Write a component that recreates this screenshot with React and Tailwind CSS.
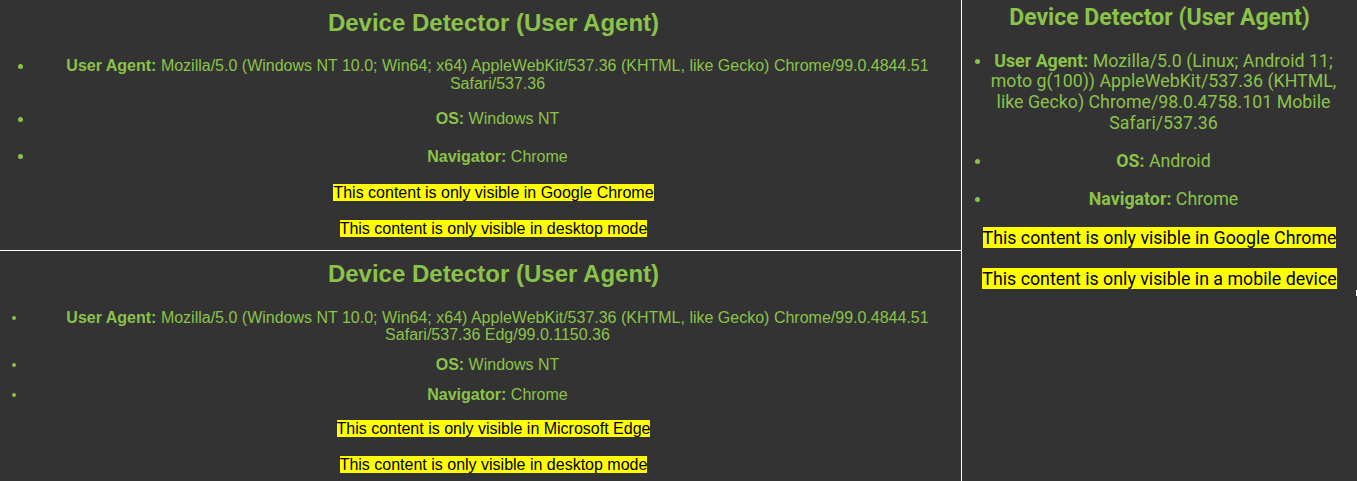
import React from 'react';

const green = 'text-[#8bc34a]';

function Dot({ className }) {
  return <div className={'shrink-0 rounded-full bg-[#8bc34a] ' + className} />;
}

export default function App() {
  return (
    <div className="flex h-[481px] w-[1357px] overflow-hidden bg-[#333333]">
      {/* left column: desktop Chrome + desktop Edge */}
      <div className={`flex w-[962px] shrink-0 flex-col border-r border-white font-['Liberation_Sans',Arial,sans-serif] ${green}`}>
        <div className="h-[251px] shrink-0 border-b border-white">
          <h2 className="mt-[9px] pl-[26px] text-center text-[24px] font-bold leading-[28px]">
            Device Detector (User Agent)
          </h2>
          <div className="mt-[20px] flex items-start text-[16px] leading-[18px]">
            <Dot className="ml-[18px] mt-[6.5px] h-[5px] w-[5px]" />
            <p className="ml-[11px] flex-1 text-center">
              <b>User Agent:</b> Mozilla/5.0 (Windows NT 10.0; Win64; x64) AppleWebKit/537.36 (KHTML, like Gecko) Chrome/99.0.4844.51
              <br />
              Safari/537.36
            </p>
          </div>
          <div className="mt-[17px] flex items-start text-[16px] leading-[18px]">
            <Dot className="ml-[18px] mt-[6.5px] h-[5px] w-[5px]" />
            <p className="ml-[11px] flex-1 text-center">
              <b>OS:</b> Windows NT
            </p>
          </div>
          <div className="mt-[19.5px] flex items-start text-[16px] leading-[18px]">
            <Dot className="ml-[18px] mt-[6.5px] h-[5px] w-[5px]" />
            <p className="ml-[11px] flex-1 text-center">
              <b>Navigator:</b> Chrome
            </p>
          </div>
          <p className="mt-[18px] pl-[26px] text-center text-[16px] leading-[18px] text-black">
            <span className="bg-[#ffff00]">This content is only visible in Google Chrome</span>
          </p>
          <p className="mt-[18px] pl-[26px] text-center text-[16px] leading-[18px] text-black">
            <span className="bg-[#ffff00]">This content is only visible in desktop mode</span>
          </p>
        </div>

        <div className="flex-1">
          <h2 className="mt-[9px] pl-[26px] text-center text-[24px] font-bold leading-[28px]">
            Device Detector (User Agent)
          </h2>
          <div className="mt-[20.5px] flex items-start text-[16px] leading-[17px]">
            <Dot className="ml-[12px] mt-[7px] h-[4px] w-[4px]" />
            <p className="ml-[18px] flex-1 text-center">
              <b>User Agent:</b> Mozilla/5.0 (Windows NT 10.0; Win64; x64) AppleWebKit/537.36 (KHTML, like Gecko) Chrome/99.0.4844.51
              <br />
              Safari/537.36 Edg/99.0.1150.36
            </p>
          </div>
          <div className="mt-[13.4px] flex items-start text-[16px] leading-[17px]">
            <Dot className="ml-[12px] mt-[7px] h-[4px] w-[4px]" />
            <p className="ml-[18px] flex-1 text-center">
              <b>OS:</b> Windows NT
            </p>
          </div>
          <div className="mt-[13px] flex items-start text-[16px] leading-[17px]">
            <Dot className="ml-[12px] mt-[7px] h-[4px] w-[4px]" />
            <p className="ml-[18px] flex-1 text-center">
              <b>Navigator:</b> Chrome
            </p>
          </div>
          <p className="mt-[17.6px] pl-[26px] text-center text-[16px] leading-[17px] text-black">
            <span className="bg-[#ffff00]">This content is only visible in Microsoft Edge</span>
          </p>
          <p className="mt-[19px] pl-[26px] text-center text-[16px] leading-[17px] text-black">
            <span className="bg-[#ffff00]">This content is only visible in desktop mode</span>
          </p>
        </div>
      </div>

      {/* right column: mobile Chrome */}
      <div className={`relative flex-1 font-['Roboto',sans-serif] ${green}`}>
        <h2 className="mt-[4.3px] text-center text-[23px] font-bold leading-[27px]">
          Device Detector (User Agent)
        </h2>
        <div className="mt-[19.4px] flex items-start pr-[19px] text-[17.8px] leading-[20.8px]">
          <Dot className="ml-[12.5px] mt-[8.6px] h-[5px] w-[5px]" />
          <p className="ml-[9.5px] flex-1 text-center">
            <b>User Agent:</b> Mozilla/5.0 (Linux; Android 11;
            <br />
            moto g(100)) AppleWebKit/537.36 (KHTML,
            <br />
            like Gecko) Chrome/98.0.4758.101 Mobile
            <br />
            Safari/537.36
          </p>
        </div>
        <div className="mt-[16.8px] flex items-start pr-[19px] text-[17.8px] leading-[20.8px]">
          <Dot className="ml-[12.5px] mt-[8.6px] h-[5px] w-[5px]" />
          <p className="ml-[9.5px] flex-1 text-center">
            <b>OS:</b> Android
          </p>
        </div>
        <div className="mt-[17.4px] flex items-start pr-[19px] text-[17.8px] leading-[20.8px]">
          <Dot className="ml-[12.5px] mt-[8.6px] h-[5px] w-[5px]" />
          <p className="ml-[9.5px] flex-1 text-center">
            <b>Navigator:</b> Chrome
          </p>
        </div>
        <p className="mt-[16.9px] text-center text-[17.8px] leading-[22px] text-black">
          <span className="bg-[#ffff00]">This content is only visible in Google Chrome</span>
        </p>
        <p className="mt-[19.3px] text-center text-[17.8px] leading-[22px] text-black">
          <span className="bg-[#ffff00]">This content is only visible in a mobile device</span>
        </p>
        <div className="absolute right-0 top-[290px] h-[6px] w-px bg-white" />
      </div>
    </div>
  );
}
